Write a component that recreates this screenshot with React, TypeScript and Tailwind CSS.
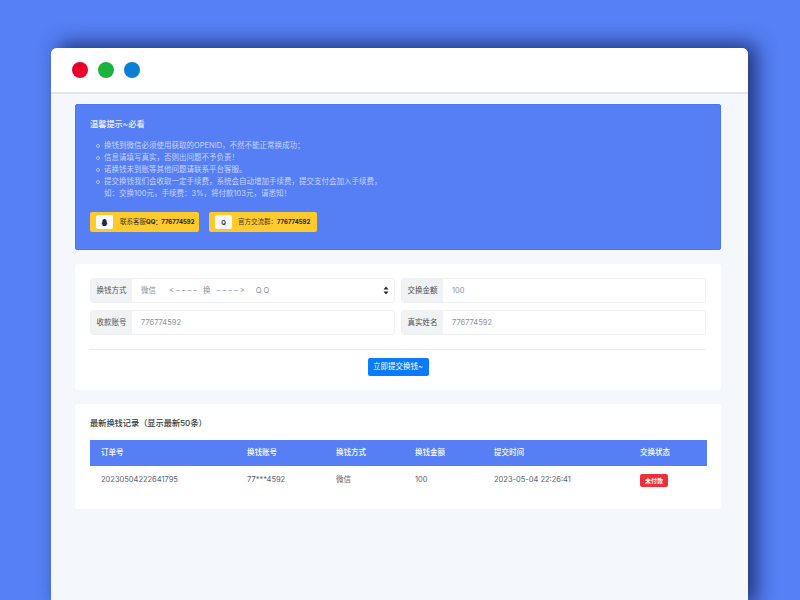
import { FaQq } from "react-icons/fa";

const font = { fontFamily: "Inter, 'Noto Sans CJK SC', sans-serif" };

const tips = [
  "换钱到微信必须使用获取的OPENID，不然不能正常换成功；",
  "信息请填写真实，否则出问题不予负责！",
  "诺换钱未到账等其他问题请联系平台客服。",
];

const columns = [
  { title: "订单号", width: "w-[146px]", value: "20230504222641795" },
  { title: "换钱账号", width: "w-[89px]", value: "77***4592" },
  { title: "换钱方式", width: "w-[79px]", value: "微信" },
  { title: "换钱金额", width: "w-[79px]", value: "100" },
  { title: "提交时间", width: "w-[146px]", value: "2023-05-04 22:26:41" },
];

const Bullet = () => <span className="mr-[4px] ml-[6px] mt-[4px] h-[4px] w-[4px] shrink-0 rounded-full border border-[#a9bdf8]" />;

const Field = ({ label, value }: { label: string; value: string }) => (
  <div className="flex h-[25px] flex-1 overflow-hidden rounded-[3px] border border-[#eef0f3] bg-white">
    <div className="flex w-[41px] items-center justify-center bg-[#f1f2f4] text-[7.5px] text-[#495057]">{label}</div>
    <div className="flex flex-1 items-center pl-[9px] text-[7.5px] text-[#8b929b]">{value}</div>
  </div>
);

const App = () => {
  return (
    <div style={font} className="h-[600px] w-[800px] overflow-hidden bg-[#5680f5] pl-[51px] pt-[48px]">
      <div className="flex h-[560px] w-[697px] flex-col overflow-hidden rounded-t-[6px] bg-[#f4f7fb] shadow-[8px_-4px_20px_rgba(20,35,95,0.85)]">
        {/* title bar */}
        <div className="flex h-[46px] shrink-0 items-center gap-[10px] border-b-2 border-[#e3e5e8] bg-white pl-[21px]">
          <span className="h-[16px] w-[16px] rounded-full bg-[#e8002d]" />
          <span className="h-[16px] w-[16px] rounded-full bg-[#1db13f]" />
          <span className="h-[16px] w-[16px] rounded-full bg-[#0a7fd6]" />
        </div>

        <div className="flex flex-col gap-[14px] pl-[24px] pr-[27px] pt-[10px]">
          {/* notice */}
          <div className="h-[146px] rounded-[2px] border border-[#4a75fb] bg-[#567ff5] px-[14px] pt-[13px] text-white">
            <h4 className="text-[8.2px] leading-[12px] font-medium text-[#eef2ff]">温馨提示~必看</h4>
            <ul className="mt-[10px] text-[7.5px] leading-[12px] text-[#c5d4fb]">
              {tips.map((tip) => (
                <li key={tip} className="flex">
                  <Bullet />
                  {tip}
                </li>
              ))}
              <li className="flex">
                <Bullet />
                <span>
                  提交换钱我们会收取一定手续费，系统会自动增加手续费，提交支付会加入手续费，
                  <br />
                  如：交换100元，手续费：3%，将付款103元，请悉知！
                </span>
              </li>
            </ul>
            <div className="mt-[12px] flex gap-[10px]">
              <div className="flex h-[20px] w-[109px] items-center rounded-[2px] bg-[#ffca2c] pl-[6px] text-[6.5px] whitespace-nowrap text-[#3a3a2a]">
                <span className="flex h-[14px] w-[17px] items-center justify-center rounded-[2px] bg-white">
                  <FaQq className="h-[7px] w-[7px] text-[#1f2a44]" />
                </span>
                <span className="ml-[7px]">联系客服<b className="text-[6px] text-[#1a1a1a]">QQ：776774592</b></span>
              </div>
              <div className="flex h-[20px] w-[108px] items-center rounded-[2px] bg-[#ffca2c] pl-[6px] text-[6.5px] whitespace-nowrap text-[#3a3a2a]">
                <span className="flex h-[14px] w-[17px] items-center justify-center rounded-[2px] bg-[#f6f8fb] text-[6px] font-bold text-[#1f2a44]">Q</span>
                <span className="ml-[6px]">官方交流群：<b className="text-[6px] text-[#1a1a1a]">776774592</b></span>
              </div>
            </div>
          </div>

          {/* exchange form */}
          <div className="h-[126px] rounded-[3px] bg-white px-[15px] pt-[14px]">
            <div className="flex gap-[6px]">
              <div className="flex h-[25px] flex-1 overflow-hidden rounded-[3px] border border-[#eef0f3]">
                <div className="flex w-[41px] items-center justify-center bg-[#f1f2f4] text-[7.5px] text-[#495057]">换钱方式</div>
                <div className="flex flex-1 items-center justify-between pl-[9px] pr-[5px] text-[7.5px] text-[#8b929b]">
                  <span className="flex items-center [font-variant-ligatures:none]">
                    <span>微信</span>
                    <span className="ml-[13px] tracking-[2px]">&lt;–––– 换 ––––&gt;</span>
                    <span className="ml-[9px] tracking-[2px]">QQ</span>
                  </span>
                  <svg width="6" height="9" viewBox="0 0 6 9" className="text-[#222]">
                    <path d="M3 0.5 5.5 3.6H0.5Z M3 8.5 0.5 5.4H5.5Z" fill="currentColor" />
                  </svg>
                </div>
              </div>
              <Field label="交换金额" value="100" />
            </div>
            <div className="mt-[7px] flex gap-[6px]">
              <Field label="收款账号" value="776774592" />
              <Field label="真实姓名" value="776774592" />
            </div>
            <div className="mt-[14px] border-t border-[#e9ebee]" />
            <div className="mt-[8px] flex justify-center">
              <button className="flex h-[18px] w-[61px] items-center justify-center rounded-[2px] bg-[#0a7bff] text-[7.5px] text-white">
                立即提交换钱~
              </button>
            </div>
          </div>

          {/* records */}
          <div className="h-[105px] rounded-[3px] bg-white px-[15px] pt-[13px]">
            <h4 className="text-[8.2px] leading-[12px] font-medium text-[#343a40]">最新换钱记录（显示最新50条）</h4>
            <table className="mt-[11px] w-[617px] table-fixed border-collapse text-left text-[7.5px]">
              <thead>
                <tr className="h-[26px] bg-[#567ff5] text-white">
                  {columns.map((col) => (
                    <th key={col.title} className={`pl-[11px] font-medium ${col.width}`}>{col.title}</th>
                  ))}
                  <th className="pl-[11px] font-medium">交换状态</th>
                </tr>
              </thead>
              <tbody>
                <tr className="h-[28px] text-[#5a6270]">
                  {columns.map((col) => (
                    <td key={col.title} className="pl-[11px]">{col.value}</td>
                  ))}
                  <td className="pl-[11px]">
                    <span className="inline-flex h-[13px] w-[28px] items-center justify-center rounded-[2px] bg-[#ee2f3c] text-[6px] font-bold text-white">未付款</span>
                  </td>
                </tr>
              </tbody>
            </table>
          </div>
        </div>
      </div>
    </div>
  );
};

export default App;
